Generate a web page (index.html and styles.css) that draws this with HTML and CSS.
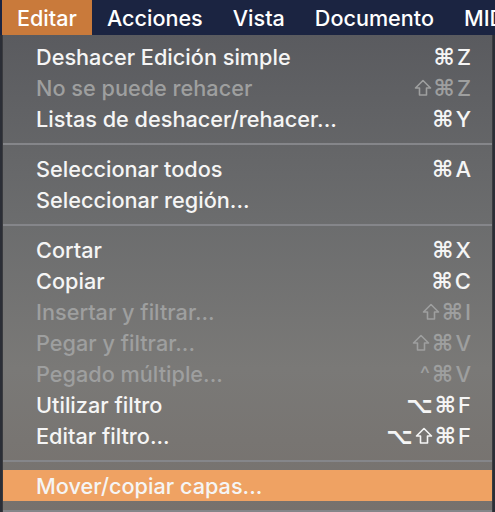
FILE: index.html
```html
<!DOCTYPE html>
<html lang="es">
<head>
  <meta charset="UTF-8" />
  <title>Editar</title>
  <link rel="stylesheet" href="styles.css">
</head>
<body>

  <nav class="menubar">
    <span class="bar-item open">Editar</span>
    <span class="bar-item">Acciones</span>
    <span class="bar-item">Vista</span>
    <span class="bar-item">Documento</span>
    <span class="bar-item">MIDI</span>
  </nav>

  <div class="menu">
    <div class="group">
      <div class="item"><span>Deshacer Edición simple</span><span class="keys"><i class="sym">⌘</i>Z</span></div>
      <div class="item disabled"><span>No se puede rehacer</span><span class="keys"><svg class="shift" viewBox="0 0 18 18"><path d="M9 1.5 L16.5 9 H12.5 V16 H5.5 V9 H1.5 Z"/></svg><i class="sym">⌘</i>Z</span></div>
      <div class="item"><span>Listas de deshacer/rehacer...</span><span class="keys"><i class="sym">⌘</i>Y</span></div>
    </div>
    <div class="sep"></div>
    <div class="group">
      <div class="item"><span>Seleccionar todos</span><span class="keys"><i class="sym">⌘</i>A</span></div>
      <div class="item"><span>Seleccionar región...</span></div>
    </div>
    <div class="sep"></div>
    <div class="group">
      <div class="item"><span>Cortar</span><span class="keys"><i class="sym">⌘</i>X</span></div>
      <div class="item"><span>Copiar</span><span class="keys"><i class="sym">⌘</i>C</span></div>
      <div class="item disabled"><span>Insertar y filtrar...</span><span class="keys"><svg class="shift" viewBox="0 0 18 18"><path d="M9 1.5 L16.5 9 H12.5 V16 H5.5 V9 H1.5 Z"/></svg><i class="sym">⌘</i>I</span></div>
      <div class="item disabled"><span>Pegar y filtrar...</span><span class="keys"><svg class="shift" viewBox="0 0 18 18"><path d="M9 1.5 L16.5 9 H12.5 V16 H5.5 V9 H1.5 Z"/></svg><i class="sym">⌘</i>V</span></div>
      <div class="item disabled"><span>Pegado múltiple...</span><span class="keys"><i class="sym caret">^</i><i class="sym">⌘</i>V</span></div>
      <div class="item"><span>Utilizar filtro</span><span class="keys"><i class="sym">⌥</i><i class="sym">⌘</i>F</span></div>
      <div class="item"><span>Editar filtro...</span><span class="keys"><i class="sym">⌥</i><svg class="shift" viewBox="0 0 18 18"><path d="M9 1.5 L16.5 9 H12.5 V16 H5.5 V9 H1.5 Z"/></svg><i class="sym">⌘</i>F</span></div>
    </div>
    <div class="sep"></div>
    <div class="group">
      <div class="item active"><span>Mover/copiar capas...</span></div>
    </div>
    <div class="sep"></div>
  </div>

</body>
</html>
```

FILE: styles.css
```css
body {
  margin: 0;
  height: 512px;
  overflow: hidden;
  background: #2b2e36;
  font-family: Inter, "Noto Sans", "DejaVu Sans", sans-serif;
  color: #f5f5f5;
}
.menubar {
  display: flex;
  height: 35px;
  background: #1b2441;
  padding-left: 2px;
  white-space: nowrap;
  overflow: hidden;
}
.bar-item {
  display: flex;
  align-items: center;
  padding: 0 15px;
  font-size: 21.6px;
  font-weight: 500;
  color: #fff;
}
.bar-item.open {
  background: #c97a3b;
}
.menu {
  margin: 0 2px 0 2px;
  padding-top: 6px;
  background: linear-gradient(#5a5b5f 0%, #6c6d6e 40%, #7a7977 70%, #76716d 100%);
  border-left: 1px solid #3a3b3f;
  border-right: 1px solid #3a3b3f;
  height: 477px;
  box-sizing: border-box;
}
.item {
  display: flex;
  justify-content: space-between;
  align-items: center;
  height: 31px;
  padding: 0 21px 0 33px;
  font-size: 21.7px;
  font-weight: 500;
}
.item.disabled {
  color: #9e9f9f;
}
.item.active {
  background: #efa263;
}
.keys {
  display: flex;
  align-items: center;
  gap: 2px;
  font-size: 22px;
  font-weight: 500;
}
.sym {
  font-style: normal;
  font-family: "DejaVu Sans", sans-serif;
  font-size: 23px;
  font-weight: bold;
}
.sym.caret {
  font-weight: normal;
  font-family: Inter, sans-serif;
  font-size: 22px;
}
.shift {
  width: 18px;
  height: 18px;
  fill: none;
  stroke: currentColor;
  stroke-width: 1.6;
  stroke-linejoin: round;
}
.sep {
  height: 19px;
  display: flex;
  align-items: center;
}
.sep::after {
  content: "";
  display: block;
  width: 100%;
  height: 2px;
  background: #85868a;
}
```
